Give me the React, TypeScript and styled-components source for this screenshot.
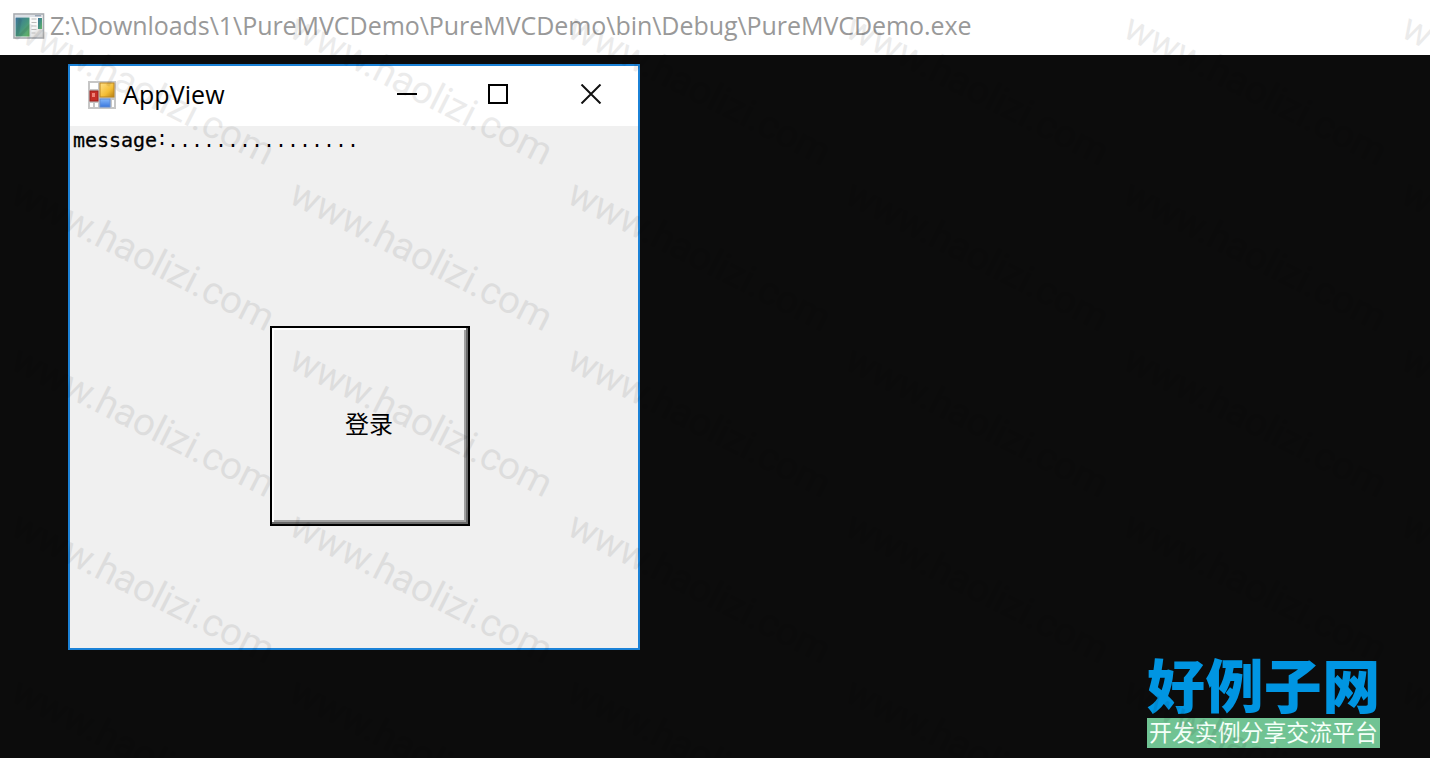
import React from "react";
import styled, { createGlobalStyle } from "styled-components";

const GlobalStyle = createGlobalStyle`
  * { box-sizing: border-box; }
  body { margin: 0; background: #0c0c0c; overflow: hidden; }
`;

const Screen = styled.div`
  position: relative;
  display: flex;
  flex-direction: column;
  width: 1430px;
  height: 758px;
  overflow: hidden;
  background: #0c0c0c;
`;

const ConsoleBar = styled.header`
  display: flex;
  align-items: center;
  flex: 0 0 55px;
  padding: 0 0 3px 13px;
  background: #fff;
`;

const ConsoleTitle = styled.span`
  margin: 0 0 2px 5px;
  font: 25px/36px "Open Sans", sans-serif;
  letter-spacing: -0.055px;
  color: #999;
  white-space: pre;
`;

const Console = styled.main`
  display: flex;
  align-items: flex-start;
  flex: 1;
  padding: 9px 68px;
`;

const AppWindow = styled.section`
  display: flex;
  flex-direction: column;
  width: 572px;
  height: 586px;
  border: 2px solid #1b82d7;
  background: #f0f0f0;
`;

const WindowBar = styled.div`
  display: flex;
  align-items: center;
  flex: 0 0 60px;
  padding: 0 36px 2px 18px;
  background: #fff;
`;

const WindowTitle = styled.span`
  flex: 1;
  margin: 0 0 2px 7px;
  font: 25px/36px "Open Sans", sans-serif;
  letter-spacing: 0.1px;
  color: #000;
`;

const WindowControls = styled.div`
  display: flex;
  gap: 70px;
  padding-bottom: 2px;
`;

const Glyph = styled.svg`
  display: block;
  flex: none;
`;

const WindowBody = styled.div`
  display: flex;
  flex-direction: column;
  align-items: flex-start;
  flex: 1;
`;

const Message = styled.div`
  display: flex;
  height: 28px;
  padding-left: 3px;
  font: 20px/28px "DejaVu Sans Mono", monospace;
  letter-spacing: -0.04px;
  color: #000;
  white-space: pre;
  -webkit-text-stroke: 0.3px #000;
`;

const Punctuation = styled.span<{ $drop?: number }>`
  margin: ${({ $drop = 0 }) => `${$drop}px`} 0 0 -1px;
  font-family: "Liberation Mono", monospace;
  letter-spacing: 0;
  -webkit-text-stroke: 0;
`;

const LoginButton = styled.button`
  width: 200px;
  height: 200px;
  margin: 172px 0 0 200px;
  padding: 0 2px 7px 0;
  border: 2px solid #000;
  border-radius: 0;
  background: #f0f0f0;
  box-shadow: inset -2px -2px #696969, inset 2px 2px #fff, inset -4px -4px #a0a0a0;
  font: 24px/32px "Noto Sans CJK SC", sans-serif;
  color: #000;
`;

const Brand = styled.div`
  position: absolute;
  left: 1147px;
  top: 654px;
  width: 233px;
`;

const BrandName = styled.div`
  height: 64px;
  font: 900 58px/58px "Noto Sans CJK SC", sans-serif;
  letter-spacing: 0.4px;
  color: #0095e2;
  white-space: nowrap;
`;

const BrandTagline = styled.div`
  height: 30px;
  padding-left: 2px;
  background: #70c393;
  font: 22.9px/27px "Noto Sans CJK SC", sans-serif;
  color: #f4fff8;
  white-space: nowrap;
`;

const Watermark = styled.svg`
  position: absolute;
  inset: 0;
  pointer-events: none;
`;

const columns = [9, 287, 565, 843, 1121, 1399];
const rows = [36, 202, 368, 534, 700];

export default function App() {
  return (
    <Screen>
      <GlobalStyle />
      <ConsoleBar>
        <Glyph width="32" height="26" viewBox="0 0 32 26">
          <defs>
            <linearGradient id="pane" x1="0" y1="0" x2="1" y2="1">
              <stop offset="0" stopColor="#3c7199" />
              <stop offset="0.5" stopColor="#459381" />
              <stop offset="1" stopColor="#67b866" />
            </linearGradient>
            <linearGradient id="sheet" x1="0" y1="0" x2="1" y2="1">
              <stop offset="0.6" stopColor="#fafafa" />
              <stop offset="1" stopColor="#c7c7c7" />
            </linearGradient>
          </defs>
          <rect x="1" y="1" width="29.5" height="24" fill="url(#sheet)" stroke="#a7abb0" strokeWidth="1.6" />
          <path d="M2 3h27" stroke="#dce0e6" strokeWidth="2" />
          <path d="M22 2.7h6" stroke="#9ba8b8" strokeWidth="1.4" />
          <rect x="2.5" y="4.5" width="14" height="19" fill="url(#pane)" />
          <path d="M18.5 6h5M18.5 9.500h5M18.500 13h5M18.500 16.500h5M18.500 20h4" stroke="#bbb" />
          <rect x="25" y="5" width="4" height="11" fill="url(#pane)" />
        </Glyph>
        <ConsoleTitle>{"Z:\\Downloads\\1\\PureMVCDemo\\PureMVCDemo\\bin\\Debug\\PureMVCDemo.exe"}</ConsoleTitle>
      </ConsoleBar>
      <Console>
        <AppWindow>
          <WindowBar>
            <Glyph width="28" height="28" viewBox="0 0 28 28">
              <defs>
                <linearGradient id="gold" x1="0" y1="0" x2="1" y2="1">
                  <stop offset="0" stopColor="#ffe18a" />
                  <stop offset="0.6" stopColor="#f4bd35" />
                  <stop offset="1" stopColor="#b57e12" />
                </linearGradient>
                <linearGradient id="blue" x1="0" y1="0" x2="0" y2="1">
                  <stop offset="0" stopColor="#84b7fa" />
                  <stop offset="1" stopColor="#3977dd" />
                </linearGradient>
              </defs>
              <rect width="28" height="28" fill="#c6c6c6" />
              <path d="M2 2h8v6H2zM2 22h3v4H2zM7 22h3v4H7zM24 19h2v7h-2z" fill="#fff" />
              <rect x="12" y="2" width="14" height="14" fill="url(#gold)" stroke="#bd8620" />
              <rect x="2" y="10" width="8" height="10" fill="#c62f28" stroke="#9c201c" />
              <rect x="4" y="12" width="3" height="4" fill="#ee8178" />
              <rect x="12" y="18" width="10" height="8" fill="url(#blue)" stroke="#608bd2" />
            </Glyph>
            <WindowTitle>AppView</WindowTitle>
            <WindowControls>
              <Glyph width="22" height="20" viewBox="0 0 22 20">
                <path d="M1 10h20" stroke="#000" strokeWidth="2" />
              </Glyph>
              <Glyph width="20" height="20" viewBox="0 0 20 20">
                <path d="M1 1h18v18H1z" fill="none" stroke="#000" strokeWidth="2" />
              </Glyph>
              <Glyph width="24" height="20" viewBox="0 0 24 20">
                <path d="M3.500 .5l19 19M22.500 .5l-19 19" stroke="#111" strokeWidth="2" />
              </Glyph>
            </WindowControls>
          </WindowBar>
          <WindowBody>
            <Message>
              message
              <Punctuation>:</Punctuation>
              <Punctuation $drop={2}>................</Punctuation>
            </Message>
            <LoginButton>登录</LoginButton>
          </WindowBody>
        </AppWindow>
      </Console>
      <Brand>
        <BrandName>好例子网</BrandName>
        <BrandTagline>开发实例分享交流平台</BrandTagline>
      </Brand>
      <Watermark width="1430" height="758" aria-hidden="true">
        {rows.map((y) =>
          columns.map((x) => (
            <text
              key={`${x}-${y}`}
              transform={`translate(${x} ${y}) rotate(26.8)`}
              fontFamily="Roboto, sans-serif"
              fontSize="38.5"
              textLength="288"
              fill="#000"
              opacity="0.075"
            >
              www.haolizi.com
            </text>
          ))
        )}
      </Watermark>
    </Screen>
  );
}
